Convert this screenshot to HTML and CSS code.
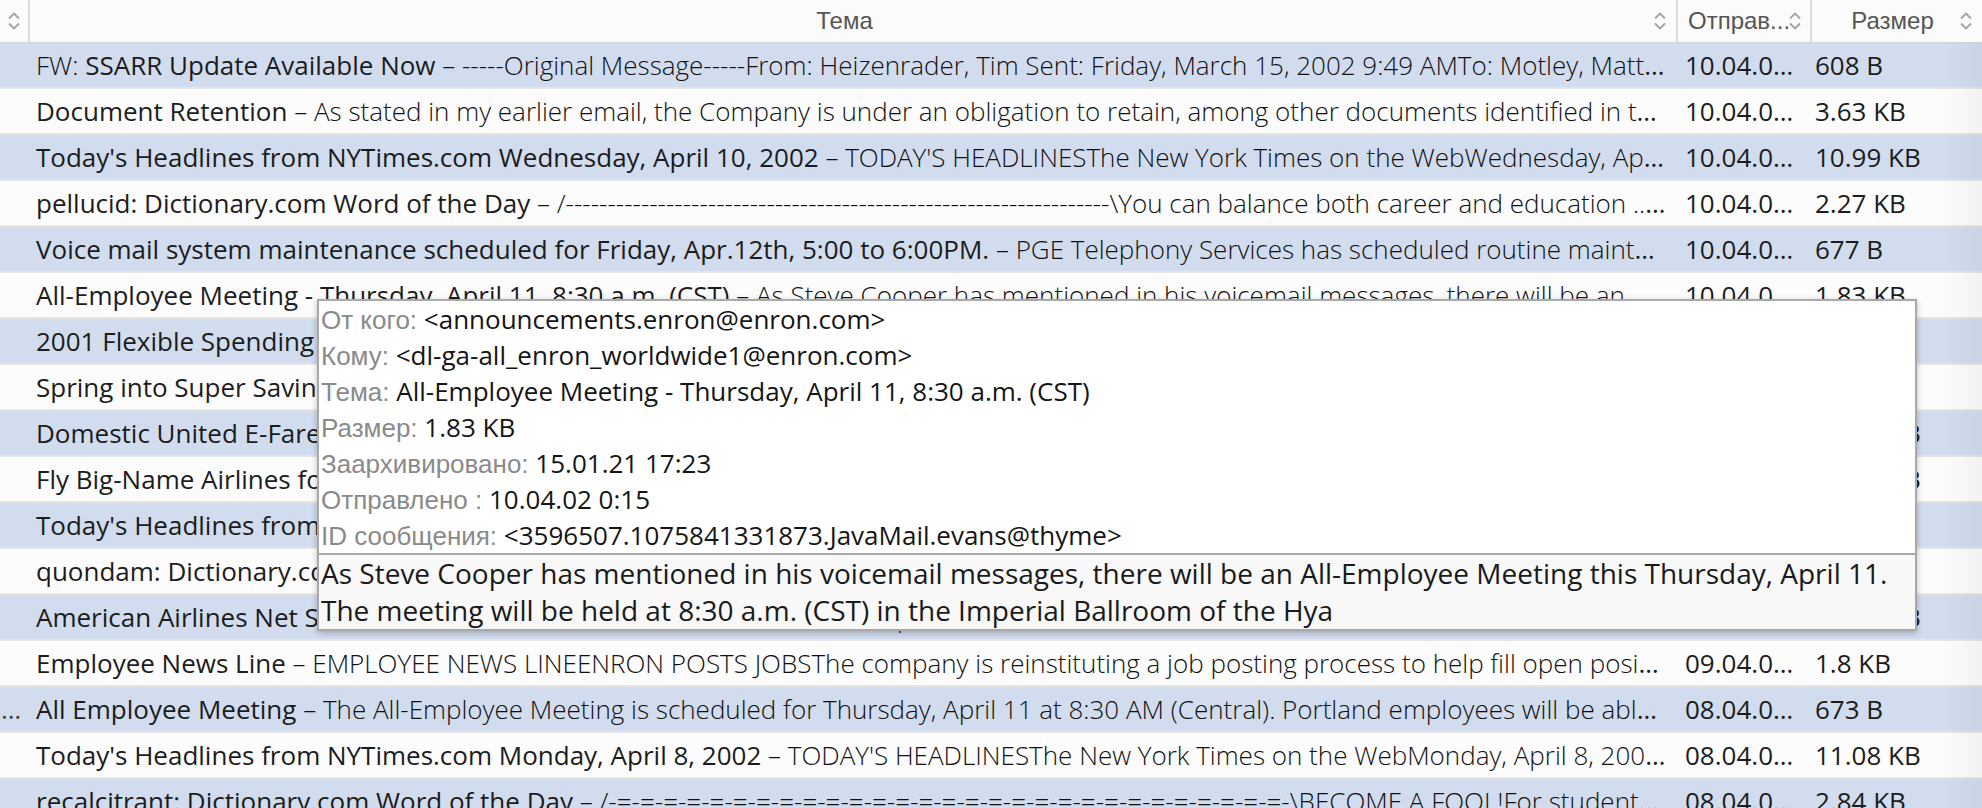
FILE: index.html
```html
<!DOCTYPE html>
<html lang="ru">
<head>
    <meta charset="UTF-8">
    <title>Почта</title>
    <link rel="stylesheet" href="styles.css">
</head>
<body>

<div class="mail-list">
    <div class="list-head">
        <div class="head-cell head-thread">
            <svg class="sort" viewBox="0 0 14 20"><path d="M2 7.5 L7 2.5 L12 7.5 M2 12.5 L7 17.5 L12 12.5"/></svg>
        </div>
        <div class="head-cell head-subject">
            <span class="head-title">Тема</span>
            <svg class="sort" viewBox="0 0 14 20"><path d="M2 7.5 L7 2.5 L12 7.5 M2 12.5 L7 17.5 L12 12.5"/></svg>
        </div>
        <div class="head-cell head-sent">
            <span class="head-title">Отправ...</span>
            <svg class="sort" viewBox="0 0 14 20"><path d="M2 7.5 L7 2.5 L12 7.5 M2 12.5 L7 17.5 L12 12.5"/></svg>
        </div>
        <div class="head-cell head-size">
            <span class="head-title">Размер</span>
            <svg class="sort" viewBox="0 0 14 20"><path d="M2 7.5 L7 2.5 L12 7.5 M2 12.5 L7 17.5 L12 12.5"/></svg>
        </div>
    </div>

    <div class="rows">
        <div class="row">
            <div class="cell thread"></div>
            <div class="cell subject"><span class="preview">FW: </span><span class="title">SSARR Update Available Now</span><span class="preview"> – -----Original Message-----From: Heizenrader, Tim Sent: Friday, March 15, 2002 9:49 AMTo: Motley, Matthew; Crandall, Sean; Alonso, Tom</span></div>
            <div class="cell sent">10.04.02 9:41</div>
            <div class="cell size">608 B</div>
        </div>
        <div class="row">
            <div class="cell thread"></div>
            <div class="cell subject"><span class="title">Document Retention</span><span class="preview"> – As stated in my earlier email, the Company is under an obligation to retain, among other documents identified in the earlier notice</span></div>
            <div class="cell sent">10.04.02 8:12</div>
            <div class="cell size">3.63 KB</div>
        </div>
        <div class="row">
            <div class="cell thread"></div>
            <div class="cell subject"><span class="title">Today's Headlines from NYTimes.com Wednesday, April 10, 2002</span><span class="preview"> – TODAY'S HEADLINESThe New York Times on the WebWednesday, April 10, 2002</span></div>
            <div class="cell sent">10.04.02 6:02</div>
            <div class="cell size">10.99 KB</div>
        </div>
        <div class="row">
            <div class="cell thread"></div>
            <div class="cell subject"><span class="title">pellucid: Dictionary.com Word of the Day</span><span class="preview"> – /-----------------------------------------------------------------\You can balance both career and education ... Earn your degree online</span></div>
            <div class="cell sent">10.04.02 3:30</div>
            <div class="cell size">2.27 KB</div>
        </div>
        <div class="row">
            <div class="cell thread"></div>
            <div class="cell subject"><span class="title">Voice mail system maintenance scheduled for Friday, Apr.12th, 5:00 to 6:00PM.</span><span class="preview"> – PGE Telephony Services has scheduled routine maintenance of the voice mail system</span></div>
            <div class="cell sent">10.04.02 1:47</div>
            <div class="cell size">677 B</div>
        </div>
        <div class="row">
            <div class="cell thread"></div>
            <div class="cell subject"><span class="title">All-Employee Meeting - Thursday, April 11, 8:30 a.m. (CST)</span><span class="preview"> – As Steve Cooper has mentioned in his voicemail messages, there will be an All-Employee Meeting this Thursday, April 11</span></div>
            <div class="cell sent">10.04.02 0:15</div>
            <div class="cell size">1.83 KB</div>
        </div>
        <div class="row">
            <div class="cell thread"></div>
            <div class="cell subject"><span class="title">2001 Flexible Spending Account Claims Deadline</span><span class="preview"> – Reminder: all claims for the 2001 plan year must be received by April 30</span></div>
            <div class="cell sent">09.04.02 23:10</div>
            <div class="cell size">842 B</div>
        </div>
        <div class="row">
            <div class="cell thread"></div>
            <div class="cell subject"><span class="title">Spring into Super Savings</span><span class="preview"> – Book now and save on spring travel to hundreds of destinations</span></div>
            <div class="cell sent">09.04.02 21:05</div>
            <div class="cell size">925 B</div>
        </div>
        <div class="row">
            <div class="cell thread"></div>
            <div class="cell subject"><span class="title">Domestic United E-Fare Specials</span><span class="preview"> – This week's E-Fares for travel this weekend</span></div>
            <div class="cell sent">09.04.02 19:44</div>
            <div class="cell size">14.52 KB</div>
        </div>
        <div class="row">
            <div class="cell thread"></div>
            <div class="cell subject"><span class="title">Fly Big-Name Airlines for Small-Name Prices</span><span class="preview"> – Great fares on major airlines, only online</span></div>
            <div class="cell sent">09.04.02 17:20</div>
            <div class="cell size">12.37 KB</div>
        </div>
        <div class="row">
            <div class="cell thread"></div>
            <div class="cell subject"><span class="title">Today's Headlines from NYTimes.com Tuesday, April 9, 2002</span><span class="preview"> – TODAY'S HEADLINESThe New York Times on the WebTuesday, April 9, 2002</span></div>
            <div class="cell sent">09.04.02 6:01</div>
            <div class="cell size">9.87 KB</div>
        </div>
        <div class="row">
            <div class="cell thread"></div>
            <div class="cell subject"><span class="title">quondam: Dictionary.com Word of the Day</span><span class="preview"> – /-----------------------------------------------------------------\</span></div>
            <div class="cell sent">09.04.02 3:30</div>
            <div class="cell size">2.1 KB</div>
        </div>
        <div class="row">
            <div class="cell thread"></div>
            <div class="cell subject"><span class="title">American Airlines Net SAAver Fares</span><span class="preview"> – This week's Net SAAver Fares and specials</span></div>
            <div class="cell sent">09.04.02 2:12</div>
            <div class="cell size">18.06 KB</div>
        </div>
        <div class="row">
            <div class="cell thread"></div>
            <div class="cell subject"><span class="title">Employee News Line</span><span class="preview"> – EMPLOYEE NEWS LINEENRON POSTS JOBSThe company is reinstituting a job posting process to help fill open positions</span></div>
            <div class="cell sent">09.04.02 0:58</div>
            <div class="cell size">1.8 KB</div>
        </div>
        <div class="row">
            <div class="cell thread">…</div>
            <div class="cell subject"><span class="title">All Employee Meeting</span><span class="preview"> – The All-Employee Meeting is scheduled for Thursday, April 11 at 8:30 AM (Central). Portland employees will be able to</span></div>
            <div class="cell sent">08.04.02 22:40</div>
            <div class="cell size">673 B</div>
        </div>
        <div class="row">
            <div class="cell thread"></div>
            <div class="cell subject"><span class="title">Today's Headlines from NYTimes.com Monday, April 8, 2002</span><span class="preview"> – TODAY'S HEADLINESThe New York Times on the WebMonday, April 8, 2002 QUOTATION OF THE DAY</span></div>
            <div class="cell sent">08.04.02 6:03</div>
            <div class="cell size">11.08 KB</div>
        </div>
        <div class="row">
            <div class="cell thread"></div>
            <div class="cell subject"><span class="title">recalcitrant: Dictionary.com Word of the Day</span><span class="preview"> – /-=-=-=-=-=-=-=-=-=-=-=-=-=-=-=-=-=-=-=-=-=-=-=-=-=-=-=-=-=-\BECOME A FOOL!For students and teachers</span></div>
            <div class="cell sent">08.04.02 3:30</div>
            <div class="cell size">2.84 KB</div>
        </div>
    </div>

    <!-- hover preview of row 6 -->
    <div class="tooltip">
        <div class="tip-head">
            <div class="tip-line"><span class="tip-label">От кого:</span> &lt;announcements.enron@enron.com&gt;</div>
            <div class="tip-line"><span class="tip-label">Кому:</span> &lt;dl-ga-all_enron_worldwide1@enron.com&gt;</div>
            <div class="tip-line"><span class="tip-label">Тема:</span> All-Employee Meeting - Thursday, April 11, 8:30 a.m. (CST)</div>
            <div class="tip-line"><span class="tip-label">Размер:</span> 1.83 KB</div>
            <div class="tip-line"><span class="tip-label">Заархивировано:</span> 15.01.21 17:23</div>
            <div class="tip-line"><span class="tip-label">Отправлено :</span> 10.04.02 0:15</div>
            <div class="tip-line"><span class="tip-label">ID сообщения:</span> &lt;3596507.1075841331873.JavaMail.evans@thyme&gt;</div>
        </div>
        <div class="tip-body">
            As Steve Cooper has mentioned in his voicemail messages, there will be an All-Employee Meeting this Thursday, April 11.<br>
            The meeting will be held at 8:30 a.m. (CST) in the Imperial Ballroom of the Hya
        </div>
    </div>
</div>

</body>
</html>
```

FILE: styles.css
```css
body {
    margin: 0;
    background: #fafafa;
    overflow: hidden;
}
.mail-list {
    position: relative;
    height: 808px;
    overflow: hidden;
    font-family: 'Open Sans', 'Noto Sans', sans-serif;
}
.mail-list::after {
    /* faint shade along the right edge, like the scroll track */
    content: '';
    position: absolute;
    top: 43px;
    right: 0;
    bottom: 0;
    width: 40px;
    background: linear-gradient(to right, rgba(0, 0, 0, 0), rgba(0, 0, 0, 0.04));
    pointer-events: none;
}

/* column header */
.list-head {
    display: grid;
    grid-template-columns: 30px 1648px 134px 170px;
    height: 42px;
    border-bottom: 1px solid #d4d4d4;
    background: #fbfbfb;
    font-family: 'Liberation Sans', Arial, sans-serif;
    font-size: 24px;
    color: #555;
}
.head-cell {
    display: flex;
    align-items: center;
    border-right: 2px solid #dcdcdc;
    min-width: 0;
}
.head-cell:last-child {
    border-right: none;
}
.head-title {
    flex: 1;
    white-space: nowrap;
    overflow: hidden;
}
.sort {
    width: 14px;
    height: 20px;
    flex: none;
}
.sort path {
    fill: none;
    stroke: #a2a2a2;
    stroke-width: 1.8;
}
.head-thread {
    padding-left: 7px;
}
.head-subject {
    padding: 0 9px 0 6px;
}
.head-subject .head-title {
    text-align: center;
}
.head-sent {
    padding: 0 8px 0 10px;
}
.head-size {
    padding: 0 9px 0 14px;
}
.head-size .head-title {
    text-align: center;
}

/* message rows */
.row {
    display: grid;
    grid-template-columns: 30px 1648px 134px 170px;
    height: 44px;
    line-height: 44px;
    border-bottom: 2px solid #e5e5e5;
    background: #fcfcfc;
    font-size: 26px;
    color: #1c1c1c;
}
.row:nth-child(odd) {
    background: #d1dcee;
}
.cell {
    white-space: nowrap;
    overflow: hidden;
    text-overflow: ellipsis;
    min-width: 0;
}
.thread {
    padding-left: 1px;
    color: #444;
}
.subject {
    padding: 0 12px 0 6px;
}
.title {
    font-weight: 400;
}
.preview {
    font-weight: 300;
    color: #111;
}
.sent {
    padding: 0 14px 0 7px;
}
.size {
    padding-left: 3px;
}

/* hover preview */
.tooltip {
    position: absolute;
    left: 317px;
    top: 299px;
    width: 1600px;
    box-sizing: border-box;
    border: 2px solid #a9a9a9;
    background: #fff;
    box-shadow: 0 2px 6px rgba(0, 0, 0, 0.25);
    color: #151515;
}
.tip-head {
    padding: 0 2px;
    font-size: 26px;
}
.tip-line {
    height: 36px;
    line-height: 36px;
    white-space: nowrap;
}
.tip-label {
    font-family: 'Liberation Sans', Arial, sans-serif;
    color: #8a8a8a;
}
.tip-body {
    border-top: 2px solid #a9a9a9;
    background: #f8f8f8;
    padding: 0 2px;
    font-size: 28px;
    line-height: 37px;
    white-space: nowrap;
    color: #1a1a1a;
}
```
